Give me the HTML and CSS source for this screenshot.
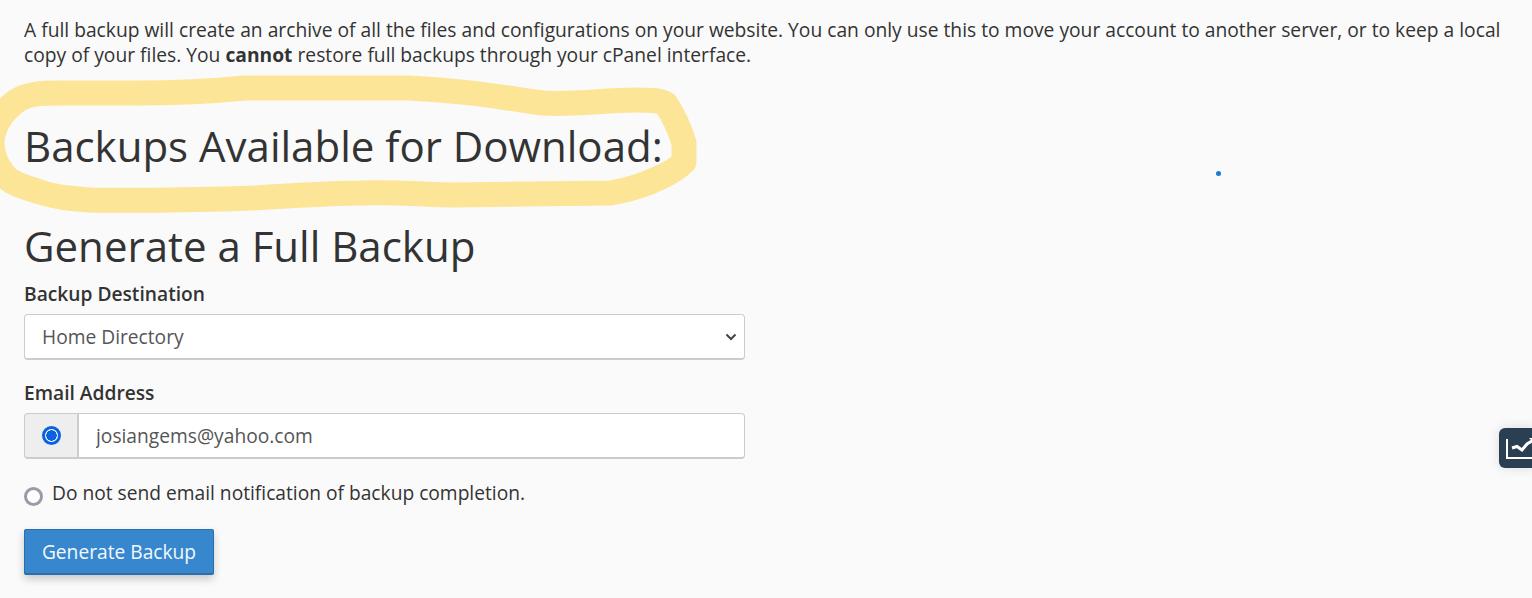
FILE: index.html
```html
<!DOCTYPE html>
<html lang="en">
<head>
    <meta charset="UTF-8">
    <meta name="viewport" content="width=device-width, initial-scale=1.0">
    <title>Full Backup</title>
    <link rel="stylesheet" href="styles.css">
</head>
<body>
    <!-- yellow marker drawn over the screenshot -->
    <svg class="marker" width="720" height="230" viewBox="0 0 720 230" aria-hidden="true">
        <path d="M-8 140 C-6 122 6 108 18 100 C28 94 40 93 59 93 L136 93 C170 93 205 92 245 88 L408 88 C460 90 500 97 543 103 C575 105 605 100 634 100 C650 100 660 100 666 104 C674 116 680 130 684 143 L684 162 C678 168 672 172 661 177 C645 185 628 190 611 193 L453 195 C430 195 400 192 362 193 C320 193 270 198 226 199 C180 200 130 201 90 200 C65 198 55 197 40 192 C25 187 15 185 7 178 C0 170 -8 160 -8 140 Z"/>
    </svg>
    <span class="dot"></span>

    <main class="page">
        <p class="intro">A full backup will create an archive of all the files and configurations on your website. You can only use this to move your account to another server, or to keep a local copy of your files. You <b>cannot</b> restore full backups through your cPanel interface.</p>

        <h2 class="avail">Backups Available for Download:</h2>
        <h2 class="generate">Generate a Full Backup</h2>

        <form class="backup-form">
            <label class="field-label" for="dest">Backup Destination</label>
            <div class="select-wrap">
                <select id="dest" class="control">
                    <option>Home Directory</option>
                </select>
                <svg class="chevron" width="12" height="8" viewBox="0 0 12 8"><path d="M1.5 1.5 6 6l4.5-4.5"/></svg>
            </div>

            <label class="field-label email-label" for="email">Email Address</label>
            <div class="input-group">
                <span class="addon"><input type="radio" name="notify" class="radio" checked></span>
                <input id="email" class="control email" type="text" value="josiangems@yahoo.com">
            </div>

            <label class="no-mail">
                <input type="radio" name="notify" class="radio">
                <span>Do not send email notification of backup completion.</span>
            </label>

            <button type="button" class="btn">Generate Backup</button>
        </form>
    </main>

    <div class="stats-tab">
        <svg width="32" height="24" viewBox="0 0 32 24">
            <path class="axis" d="M2 2v19h30"/>
            <path class="trend" d="M7 11l5-1.5 5 3.5 5-6 6-3.5"/>
            <path class="arrow" d="M24 1h7v7z"/>
        </svg>
    </div>
</body>
</html>
```

FILE: styles.css
```css
html, body {
    margin: 0;
    height: 100%;
    overflow: hidden;
}

body {
    background-color: #fafafa;
    color: #333;
    font-family: "Open Sans", sans-serif;
    font-size: 19.2px;
    position: relative;
}

.page {
    padding: 17px 24px 0;
    position: relative;
}

.intro {
    margin: 0;
    line-height: 25px;
    font-size: 19.24px;
}

h2 {
    font-weight: 400;
    margin: 0;
    font-size: 42px;
    line-height: 50px;
}

.avail {
    margin-top: 54px;
}

.generate {
    margin-top: 50px;
}

.backup-form {
    width: 721px;
    margin-top: 10px;
}

.field-label {
    display: block;
    font-weight: 600;
    line-height: 26px;
}

.email-label {
    margin-top: 20px;
}

.select-wrap {
    position: relative;
    margin-top: 7px;
}

.control {
    box-sizing: border-box;
    width: 100%;
    height: 46px;
    border: 1px solid #ccc;
    border-bottom-width: 2px;
    border-radius: 4px;
    background-color: #fff;
    color: #555;
    font: inherit;
    padding: 0 17px;
    appearance: none;
    outline: none;
}

.select-wrap .control {
    display: block;
}

.chevron {
    position: absolute;
    right: 8px;
    top: 19px;
    fill: none;
    stroke: #444;
    stroke-width: 2;
}

.input-group {
    display: flex;
    margin-top: 7px;
}

.addon {
    box-sizing: border-box;
    width: 55px;
    height: 46px;
    flex: none;
    display: flex;
    align-items: center;
    justify-content: center;
    background-color: #eee;
    border: 1px solid #ccc;
    border-bottom-width: 2px;
    border-right-width: 2px;
    border-radius: 4px 0 0 4px;
}

.email {
    border-left: 0;
    border-radius: 0 4px 4px 0;
}

.radio {
    appearance: none;
    box-sizing: border-box;
    width: 19px;
    height: 19px;
    margin: 0;
    border: 3px solid #9a9aa8;
    border-radius: 50%;
    background-color: #fff;
}

.radio:checked {
    border-color: #0b62e0;
    background: radial-gradient(circle, #0b62e0 0 5px, #fff 5.5px);
}

.no-mail {
    display: flex;
    align-items: flex-start;
    gap: 9px;
    margin-top: 21px;
    line-height: 26px;
}

.no-mail .radio {
    margin-top: 7px;
    flex: none;
}

.btn {
    display: block;
    box-sizing: border-box;
    height: 46px;
    width: 190px;
    margin-top: 23px;
    background-color: #3787ce;
    border: 1px solid #2c6fa9;
    border-bottom-width: 2px;
    border-radius: 2px;
    color: #f4f8fc;
    font: inherit;
    box-shadow: 0 4px 8px rgba(0, 0, 0, 0.2);
}

/* overlays */
.marker {
    position: absolute;
    left: 0;
    top: 0;
}

.marker path {
    fill: none;
    stroke: #fce596;
    stroke-width: 25;
    stroke-linejoin: round;
}

.dot {
    position: absolute;
    left: 1216px;
    top: 171px;
    width: 5px;
    height: 5px;
    border-radius: 50%;
    background-color: #1a7ad6;
}

.stats-tab {
    position: absolute;
    left: 1499px;
    top: 428px;
    width: 40px;
    height: 40px;
    background-color: #2b3f52;
    border-radius: 6px;
    box-shadow: 0 0 12px rgba(0, 0, 0, 0.12);
}

.stats-tab svg {
    position: absolute;
    left: 6px;
    top: 9px;
    fill: none;
}

.axis {
    stroke: #fff;
    stroke-width: 2;
}

.trend {
    stroke: #fff;
    stroke-width: 3;
}

.arrow {
    fill: #fff;
}
```
